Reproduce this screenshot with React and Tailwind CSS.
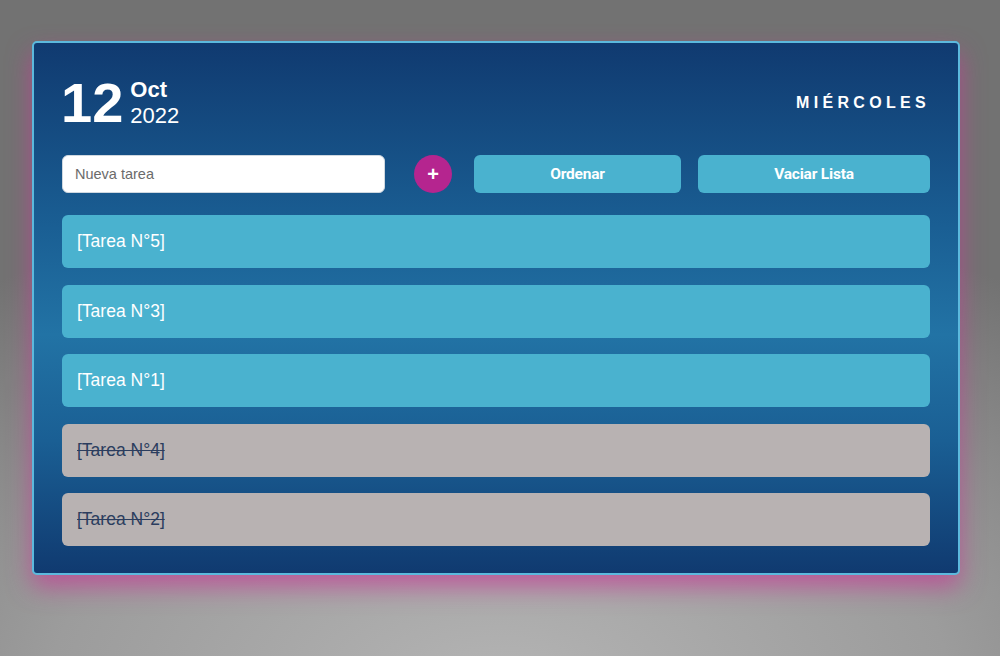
import React from 'react'

const tareas = [
  { id: 5, hecha: false },
  { id: 3, hecha: false },
  { id: 1, hecha: false },
  { id: 4, hecha: true },
  { id: 2, hecha: true },
]

export default function App() {
  return (
    <div className="h-[656px] w-full overflow-hidden bg-[radial-gradient(ellipse_90%_75%_at_50%_105%,#b4b4b4_0%,#9c9c9c_50%,#727272_100%)] pt-[41px] font-['Liberation_Sans',Arial,sans-serif]">
      <div className="ml-[32px] w-[928px] rounded-[5px] border-2 border-[#5cb9dd] bg-[linear-gradient(to_bottom,#103a70_0%,#1a5f94_35%,#2273a5_55%,#1a5f94_75%,#103a70_100%)] px-[28px] pt-[32px] pb-[27px] shadow-[0_12px_24px_rgba(196,60,150,0.7)]">
        <header className="flex items-center justify-between">
          <div className="flex items-end">
            <span className="-ml-[1px] text-[56px] font-bold leading-none text-white">12</span>
            <div className="mb-[2px] ml-[7px] flex flex-col text-[22px] leading-[26px] text-white">
              <span className="font-bold">Oct</span>
              <span>2022</span>
            </div>
          </div>
          <span className="text-[16px] font-bold tracking-[0.27em] text-white">MIÉRCOLES</span>
        </header>

        <div className="mt-[24px] flex h-[38px] items-center">
          <input
            className="h-full w-[323px] rounded-[6px] border border-[#cfd8e0] bg-white px-[12px] text-[14.5px] text-[#333] placeholder:text-[#6b6b6b] outline-none"
            placeholder="Nueva tarea"
          />
          <button className="ml-[29px] flex h-[38px] w-[38px] items-center justify-center rounded-full bg-[#b5258f] text-[20px] font-bold leading-none text-white">
            +
          </button>
          <button className="ml-[22px] h-full w-[207px] rounded-[6px] bg-[#4ab2cf] pt-[1px] font-['Roboto',sans-serif] text-[15.5px] font-bold tracking-[-0.2px] text-white">
            Ordenar
          </button>
          <button className="ml-[17px] h-full flex-1 rounded-[6px] bg-[#4ab2cf] pt-[1px] font-['Roboto',sans-serif] text-[15.5px] font-bold tracking-[-0.2px] text-white">
            Vaciar Lista
          </button>
        </div>

        <ul className="mt-[22px] flex flex-col gap-[16.5px]">
          {tareas.map(t => (
            <li
              key={t.id}
              className={`flex h-[53px] items-center rounded-[6px] pl-[15px] text-[17.5px] ${
                t.hecha ? 'bg-[#b8b2b2] text-[#2b3d5e] line-through' : 'bg-[#4ab2cf] text-white'
              }`}
            >
              [Tarea N°{t.id}]
            </li>
          ))}
        </ul>
      </div>
    </div>
  )
}
